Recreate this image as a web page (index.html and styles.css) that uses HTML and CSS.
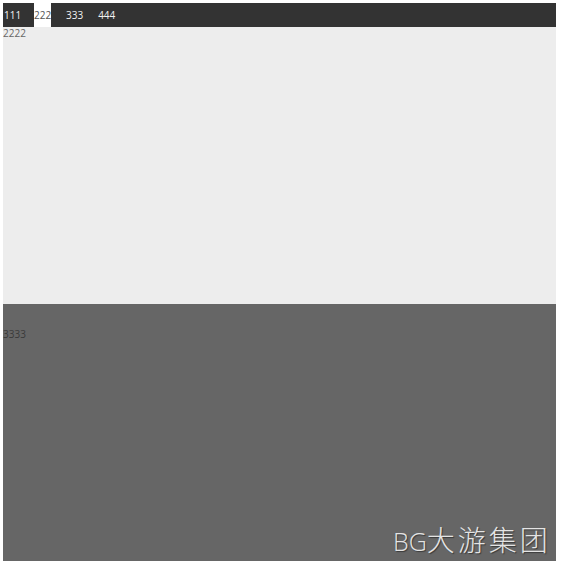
FILE: index.html
```html
<!DOCTYPE html>
<html lang="zh">
<head>
<meta charset="utf-8">
<title>Page</title>
<link rel="stylesheet" href="styles.css">
</head>
<body>
<div class="page">
  <nav class="nav">
    <a class="nav-item first">111</a>
    <a class="nav-item active">222</a>
    <a class="nav-item">333</a>
    <a class="nav-item">444</a>
  </nav>
  <main class="main">2222</main>
  <footer class="footer">3333</footer>
</div>
<div class="watermark"><span class="wm-latin">BG</span><span class="wm-cjk">大游集团</span></div>
</body>
</html>
```

FILE: styles.css
```css
html, body {
  margin: 0;
  padding: 0;
  background: #ffffff;
}
body {
  padding: 3px 5px 3px 3px;
  font-family: "Open Sans", "Noto Sans", "Noto Sans CJK SC", sans-serif;
  font-size: 10px;
  line-height: 13px;
}
.page {
  width: 553px;
  height: 558px;
  display: flex;
  flex-direction: column;
}
.nav {
  height: 24px;
  background: #333333;
  display: flex;
  align-items: stretch;
}
.nav-item {
  display: flex;
  align-items: center;
  color: #f2f2f2;
  margin-right: 15px;
}
.nav-item.first {
  width: 31px;
  margin-right: 0;
  padding-left: 1px;
  box-sizing: border-box;
}
.nav-item.active {
  background: #ffffff;
  color: #555555;
  width: 17px;
}
.main {
  height: 277px;
  background: #ededed;
  color: #666666;
  padding-top: 0;
  box-sizing: border-box;
}
.footer {
  flex: 1;
  background: #666666;
  color: #3a3a3a;
  padding-top: 24px;
}
.watermark {
  position: absolute;
  left: 393px;
  top: 521px;
  font-family: "Open Sans", "Noto Sans CJK SC", sans-serif;
  line-height: 36px;
  color: #e4e4e4;
  text-shadow: 1px 1px 1px rgba(0,0,0,0.45);
  white-space: nowrap;
}
.wm-latin {
  font-size: 25px;
  font-weight: 300;
}
.wm-cjk {
  font-family: "Noto Sans CJK SC", sans-serif;
  font-size: 28px;
  letter-spacing: 3px;
  font-weight: 300;
}
```
